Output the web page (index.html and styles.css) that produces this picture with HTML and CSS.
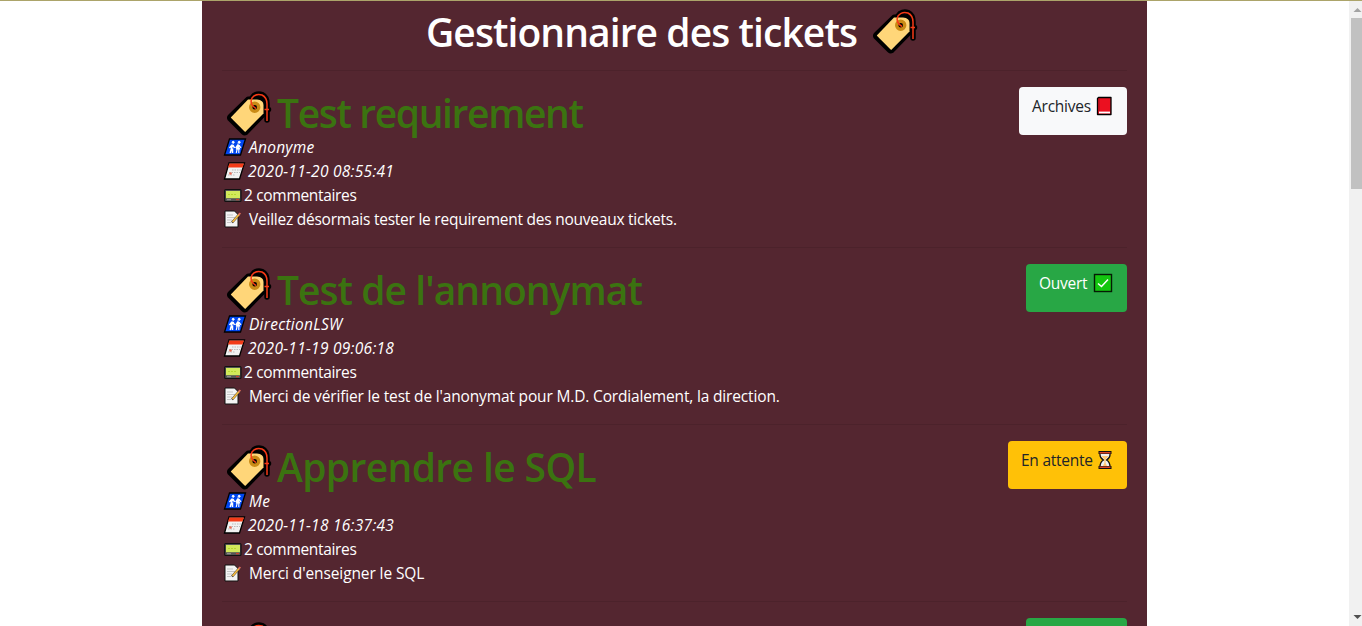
FILE: index.html
```html
<!DOCTYPE html>
<html lang="fr">
<head>
<meta charset="utf-8">
<title>Gestionnaire des tickets</title>
<link rel="stylesheet" href="styles.css">
</head>
<body>
<svg class="defs" aria-hidden="true">
  <symbol id="tag" viewBox="0 0 46 46">
    <path d="M22 8.500H32Q38 8.500 38.500 15V24L20 43Q18.500 44 17 42.500L3.500 29Q2.500 27.500 4 26Z" fill="#ffd679" stroke="#000" stroke-width="4.200" stroke-linejoin="round"/>
    <path d="M28 15Q23 10 28 5.500Q32 3 36 4.500Q41 7 41 14V30M38.500 19.500H42.500" fill="none" stroke="#000" stroke-width="5.500" stroke-linecap="round"/>
    <path d="M22 9.500H31Q37.500 10 37.500 15V23.500L19.200 42 4.800 27.500Z" fill="#ffd679"/>
    <circle cx="28.700" cy="17.200" r="4" fill="#000" stroke="#ca8b16" stroke-width="3.400"/>
    <path d="M30 18.500Q23 14 26 8Q30 3 36 5Q41 7.500 41 14V31M38.500 19.500H43" fill="none" stroke="#f63a17" stroke-width="1.500"/>
  </symbol>
  <symbol id="people" viewBox="0 0 24 20">
    <path d="M6.500 2H22.500L17.500 18H1.500Z" fill="#0046ef" stroke="#000" stroke-width="1.300"/>
    <g fill="#fff" stroke="#fff"><circle cx="10.200" cy="5.300" r="1" /><circle cx="16.200" cy="5.300" r="1"/>
    <path d="M9.500 7.500L8.500 11.500M8.500 11.500L7.200 16M9.500 11.500V16M9 8L6.500 11M10 8L11.500 11" fill="none" stroke-width="1.500"/>
    <path d="M15 7.500L13.500 12H16.500ZM14.200 12L13.200 16M15.800 12V16M14.500 8L12.500 11M16 8L18 11" stroke-width="1.100"/></g>
  </symbol>
  <symbol id="calendar" viewBox="0 0 24 20">
    <path d="M6 2H21.500L16.500 18H1.500Z" fill="#f2f2f2" stroke="#000" stroke-width="1.300"/>
    <path d="M6.300 2.500H21L19.500 6.500H5Z" fill="#f33b18"/>
    <path d="M9 9H18M6 11.500H17M5 14H12" stroke="#bbb" stroke-width="1.200" stroke-dasharray="1.500 1"/>
    <circle cx="7.500" cy="12.500" r="1.300" fill="#ed6b55"/>
  </symbol>
  <symbol id="pager" viewBox="0 0 20 20">
    <rect x="1.700" y="4.500" width="16.300" height="12" rx="1" fill="#555" stroke="#111" stroke-width="1.200"/>
    <rect x="3" y="6" width="14" height="7.200" fill="#d2e95b"/>
    <path d="M5 9.500H14" stroke="#b6d630" stroke-dasharray="2 1"/>
    <path d="M4 14.700H8" stroke="#999"/><path d="M13 14.700H16" stroke="#e53b25"/>
  </symbol>
  <symbol id="memo" viewBox="0 0 20 20">
    <path d="M2 2H11.500L15 5.500V18H2Z" fill="#f4f4f4" stroke="#111" stroke-width="1"/>
    <path d="M4 6H10M4 8.500H12M4 11H9M4 13.500H8" stroke="#c5c5c5"/>
    <path d="M9 13.500L17 4.500" stroke="#333" stroke-width="2.400"/>
    <path d="M9.500 13L16.500 5" stroke="#f7bd42" stroke-width="1.800"/>
    <path d="M15.700 6L17.300 4" stroke="#e56c5d" stroke-width="1.800"/>
  </symbol>
  <symbol id="book" viewBox="0 0 18 20">
    <path d="M3.500 1.500H16V18.500H2.500V2.500Z" fill="#eb1020" stroke="#000" stroke-width="1.300" stroke-linejoin="round"/>
    <path d="M4 3V15" stroke="#a60c18"/><path d="M4 16.500H15" stroke="#fff" stroke-width="1.800"/>
  </symbol>
  <symbol id="check" viewBox="0 0 20 20">
    <rect x="1.500" y="1.500" width="17" height="17" fill="#13c60f" stroke="#051b05" stroke-width="1.400"/>
    <path d="M5 10.500L8.500 13.500L15 6.500" fill="none" stroke="#fff" stroke-width="1.500"/>
  </symbol>
  <symbol id="hourglass" viewBox="0 0 16 20">
    <path d="M3 3H13V5Q13 8 9.500 10Q13 12 13 17H3Q3 12 6.500 10Q3 8 3 5Z" fill="#eef0f2" stroke="#111" stroke-width="1.300"/>
    <path d="M4.500 6H11.500L8.600 9.500V13L10 16H6L7.400 13V9.500Z" fill="#ffc873"/>
    <path d="M1.500 2.500H14.500M1.500 17.500H14.500" stroke="#111" stroke-width="3"/><path d="M2.500 2.700H13.500M2.500 17.300H13.500" stroke="#d84428" stroke-width="1.500"/>
  </symbol>
</svg>
<div class="viewport">
  <main class="panel">
    <h1 class="title"><span class="title-text">Gestionnaire des tickets</span><svg class="tag"><use href="#tag"/></svg></h1>
    <article class="ticket">
      <header class="head"><h2 class="name"><svg class="tag"><use href="#tag"/></svg><span class="n1">Test requirement</span></h2><a class="btn light"><span>Archives</span><svg class="book"><use href="#book"/></svg></a></header>
      <p class="line author"><svg class="wide"><use href="#people"/></svg><i>Anonyme</i></p>
      <p class="line date"><svg class="wide"><use href="#calendar"/></svg><i>2020-11-20 08:55:41</i></p>
      <p class="line count"><svg class="icon"><use href="#pager"/></svg><span>2 commentaires</span></p>
      <p class="line text"><svg class="icon"><use href="#memo"/></svg><span class="t1">Veillez désormais tester le requirement des nouveaux tickets.</span></p>
    </article>
    <article class="ticket">
      <header class="head"><h2 class="name"><svg class="tag"><use href="#tag"/></svg><span class="n2">Test de l'annonymat</span></h2><a class="btn open"><span>Ouvert</span><svg class="check"><use href="#check"/></svg></a></header>
      <p class="line author"><svg class="wide"><use href="#people"/></svg><i>DirectionLSW</i></p>
      <p class="line date"><svg class="wide"><use href="#calendar"/></svg><i>2020-11-19 09:06:18</i></p>
      <p class="line count"><svg class="icon"><use href="#pager"/></svg><span>2 commentaires</span></p>
      <p class="line text"><svg class="icon"><use href="#memo"/></svg><span class="t2">Merci de vérifier le test de l'anonymat pour M.D. Cordialement, la direction.</span></p>
    </article>
    <article class="ticket">
      <header class="head"><h2 class="name"><svg class="tag"><use href="#tag"/></svg><span class="n3">Apprendre le SQL</span></h2><a class="btn wait"><span>En attente</span><svg class="hourglass"><use href="#hourglass"/></svg></a></header>
      <p class="line author"><svg class="wide"><use href="#people"/></svg><i>Me</i></p>
      <p class="line date"><svg class="wide"><use href="#calendar"/></svg><i>2020-11-18 16:37:43</i></p>
      <p class="line count"><svg class="icon"><use href="#pager"/></svg><span>2 commentaires</span></p>
      <p class="line text"><svg class="icon"><use href="#memo"/></svg><span class="t3">Merci d'enseigner le SQL</span></p>
    </article>
    <article class="ticket">
      <header class="head"><h2 class="name"><svg class="tag"><use href="#tag"/></svg></h2><a class="btn open"></a></header>
    </article>
  </main>
  <aside class="scrollbar"><svg class="arrow" viewBox="0 0 13 17"><path d="M4.500 11L8.500 7L12.500 11Z" fill="#a3a3a3"/></svg><div class="thumb"></div><svg class="arrow" viewBox="0 0 13 17"><path d="M4.500 6L8.500 10L12.500 6Z" fill="#505050"/></svg></aside>
</div>
</body>
</html>
```
FILE: styles.css
```css
* { box-sizing: border-box; }
body { margin: 0; overflow: hidden; background: #fff; font: 15.500px/24px "Open Sans", "Noto Sans", sans-serif; color: #fff; }
.defs { position: absolute; width: 0; height: 0; }
.viewport { height: 626px; border-top: 1px solid #aca46a; display: flex; justify-content: space-between; overflow: hidden; }
.panel { width: 945px; height: 900px; margin-left: 202px; padding: 7px 20px 0; background: #542630; flex: none; }
.title { margin: 0; padding-right: 5px; height: 62px; display: flex; justify-content: center; font-size: 39px; line-height: 48px; font-weight: 600; white-space: nowrap; }
.title-text { letter-spacing: -0.920px; }
.title .tag { margin: 0 0 0 15px; }
.tag { width: 46px; height: 46px; flex: none; }
.ticket { border-top: 1px solid #4c222b; height: 177px; padding-top: 16px; }
.head { height: 48px; display: flex; justify-content: space-between; }
.name { margin: 0; display: flex; color: #3b7310; font-size: 39px; line-height: 52px; font-weight: 600; white-space: nowrap; }
.name .tag { margin: 3px 5px 0 4px; }
.n1 { letter-spacing: -1.370px; }
.n2 { letter-spacing: -0.960px; }
.n3 { letter-spacing: -0.620px; }
.line { margin: 0; height: 24px; display: flex; white-space: nowrap; }
.line i { letter-spacing: 0.270px; }
.wide { width: 24px; height: 20px; margin: 2px 2px 0 1px; flex: none; }
.date .wide { margin-right: 1px; }
.icon { width: 20px; height: 20px; margin: 2px 1px 0 1px; flex: none; }
.count span { letter-spacing: -0.320px; }
.text .icon { margin-right: 6px; }
.t1 { letter-spacing: -0.240px; }
.t2 { letter-spacing: -0.160px; }
.t3 { letter-spacing: -0.100px; }
.btn { height: 48px; border-radius: 4px; padding: 7px 14px 8px 13px; display: flex; justify-content: space-between; letter-spacing: -0.250px; }
.light { width: 108px; background: #f8f9fa; color: #212529; }
.open { width: 101px; background: #28a745; }
.wait { width: 119px; background: #ffc107; color: #212529; }
.book { width: 18px; height: 20px; margin-top: 2px; }
.check { width: 20px; height: 20px; margin-top: 2px; }
.hourglass { width: 16px; height: 20px; margin-top: 2px; }
.scrollbar { width: 13px; background: #f1f1f1; display: flex; flex-direction: column; }
.arrow { width: 13px; height: 17px; flex: none; }
.thumb { height: 171px; background: #c1c1c1; margin: 0 0 auto 2px; }
```
